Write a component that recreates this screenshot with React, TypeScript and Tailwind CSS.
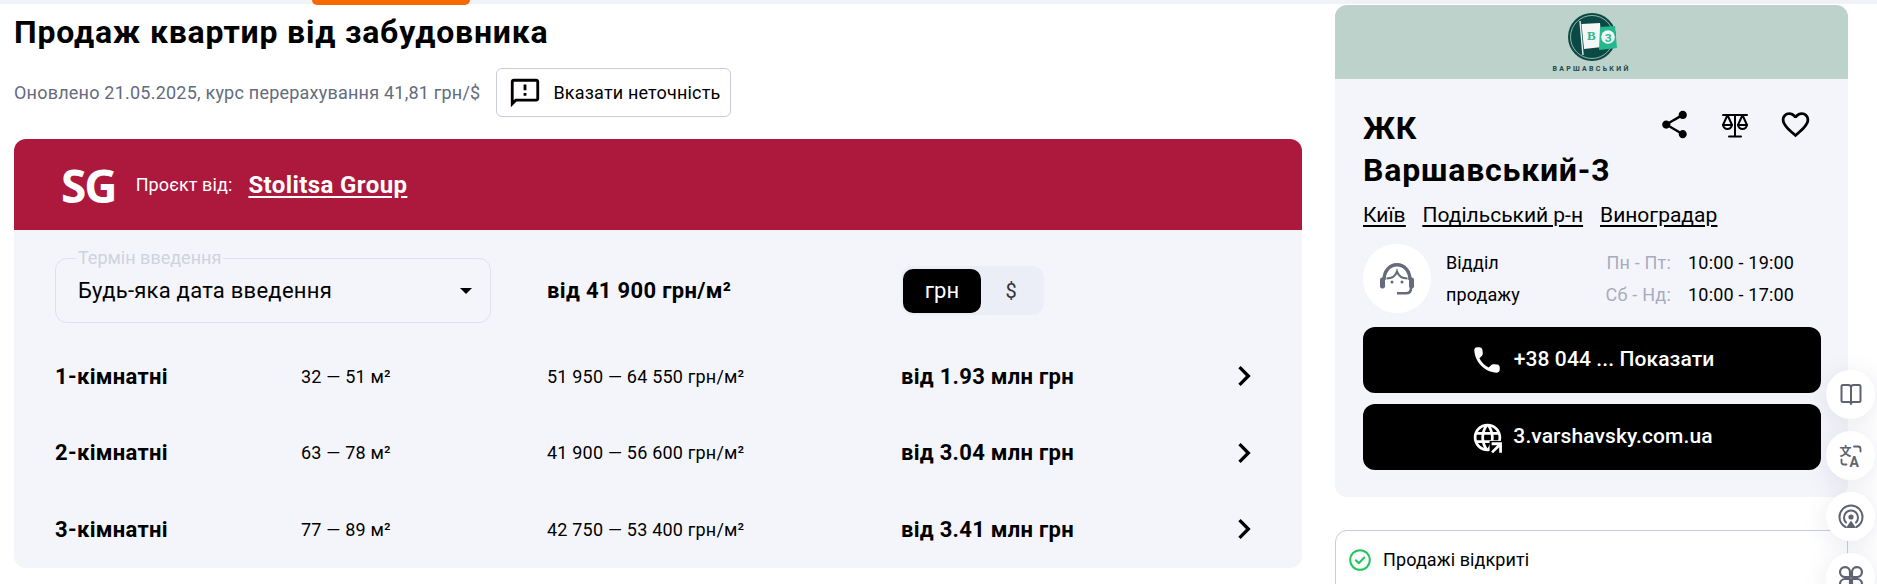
import React from "react";
import { MdOutlineFeedback, MdShare, MdFavoriteBorder, MdChevronRight } from "react-icons/md";

const rows = [
  ["1-кімнатні", "32 — 51 м²", "51 950 — 64 550 грн/м²", "від 1.93 млн грн"],
  ["2-кімнатні", "63 — 78 м²", "41 900 — 56 600 грн/м²", "від 3.04 млн грн"],
  ["3-кімнатні", "77 — 89 м²", "42 750 — 53 400 грн/м²", "від 3.41 млн грн"],
];

function Logo() {
  return (
    <svg width="70" height="50" viewBox="0 0 70 50" className="block">
      <circle cx="35" cy="25" r="24" fill="#0b4a44" />
      <circle cx="35" cy="25" r="21.5" fill="none" stroke="#cfe0da" strokeWidth="0.7" />
      <path d="M23 9 L26 43" stroke="#e6efec" strokeWidth="1.4" />
      <path d="M24.5 12 L43 11 L45 35 L27 37 Z" fill="#f4f7f5" />
      <path d="M43 15 L58 14 L60 36 L42 38 Z" fill="#25b88e" />
      <text x="30" y="28" fontSize="13" fontWeight="700" fill="#2bb98f" fontFamily="'Liberation Serif', serif">В</text>
      <circle cx="51" cy="25" r="6.8" fill="#f4f7f5" />
      <text x="47.8" y="29.5" fontSize="11" fontWeight="700" fill="#25b88e" fontFamily="Roboto, sans-serif">З</text>
    </svg>
  );
}

function ScaleIcon() {
  return (
    <svg width="28" height="26" viewBox="0 0 28 26" fill="none" stroke="#000" strokeWidth="2" strokeLinejoin="round" strokeLinecap="round">
      <path d="M2 3h24M14 3v21M8 24.5h12" />
      <path d="M6.5 3 2 13c.6 2.6 2.4 4 4.500 4s3.900-1.400 4.500-4z" />
      <path d="M21.500 3 17 13c.6 2.600 2.400 4 4.500 4s3.900-1.400 4.500-4z" />
      <path d="M2 13h9M17 13h9" />
    </svg>
  );
}

function AgentIcon() {
  return (
    <svg width="36" height="32" viewBox="0 0 36 32" fill="none">
      <path d="M5 17C5 8 10.500 1.800 18 1.800S31 8 31 17" stroke="#666b7b" strokeWidth="3.400" />
      <rect x="1" y="14.500" width="5" height="11" rx="2.200" fill="#666b7b" />
      <rect x="30" y="14.500" width="5" height="11" rx="2.200" fill="#666b7b" />
      <path d="M7.500 15.500C12.500 15.500 16.500 13 18 8.500c1.500 4.500 5.500 7 10.500 7" stroke="#666b7b" strokeWidth="2.200" />
      <path d="M32 25c0 4-2 5.300-5 5.300h-9" stroke="#666b7b" strokeWidth="2.600" />
      <circle cx="13" cy="19" r="1.500" fill="#666b7b" />
      <circle cx="23" cy="19" r="1.500" fill="#666b7b" />
    </svg>
  );
}

function PhoneIcon() {
  return (
    <svg width="34" height="34" viewBox="0 0 24 24" fill="#fff">
      <path d="M19.230 15.260l-2.540-.29a1.990 1.990 0 0 0-1.640.57l-1.840 1.840a15.045 15.045 0 0 1-6.590-6.590l1.850-1.850c.43-.43.64-1.030.57-1.640l-.29-2.520a2.001 2.001 0 0 0-1.990-1.770H5.030c-1.130 0-2.070.94-2 2.070.53 8.540 7.360 15.360 15.890 15.890 1.130.07 2.070-.87 2.070-2v-1.730c.01-1.010-.75-1.860-1.760-1.980z" />
    </svg>
  );
}

function GlobeIcon() {
  return (
    <svg width="33" height="33" viewBox="0 0 24 24" fill="#fff">
      <path d="M11.99 2C6.47 2 2 6.48 2 12s4.470 10 9.990 10C17.520 22 22 17.520 22 12S17.520 2 11.990 2zm6.930 6h-2.950c-.32-1.250-.78-2.450-1.380-3.560 1.840.63 3.370 1.910 4.330 3.560zM12 4.040c.83 1.200 1.480 2.530 1.910 3.960h-3.820c.43-1.430 1.080-2.760 1.910-3.960zM4.260 14C4.100 13.360 4 12.690 4 12s.1-1.360.26-2h3.380c-.08.66-.14 1.320-.14 2 0 .68.06 1.340.14 2H4.260zm.82 2h2.950c.32 1.250.78 2.450 1.380 3.560-1.840-.63-3.370-1.900-4.330-3.560zm2.950-8H5.080c.96-1.660 2.490-2.930 4.330-3.560C8.810 5.550 8.350 6.750 8.030 8zM12 19.960c-.83-1.200-1.480-2.530-1.910-3.960h3.820c-.43 1.430-1.080 2.760-1.910 3.960zM14.340 14H9.660c-.09-.66-.16-1.320-.16-2 0-.68.07-1.350.16-2h4.680c.09.65.16 1.320.16 2 0 .68-.07 1.340-.16 2zm.25 5.560c.6-1.110 1.060-2.310 1.380-3.560h2.950c-.96 1.650-2.490 2.930-4.330 3.560zM16.360 14c.08-.66.14-1.320.14-2 0-.68-.06-1.340-.14-2h3.380c.16.64.26 1.310.26 2s-.1 1.360-.26 2h-3.380z" />
      <rect x="13.500" y="14.500" width="10.500" height="9.500" fill="#000" />
      <path d="M15 15.500h7.500V23H20.500v-4l-4.500 4.500-1.400-1.400 4.500-4.500H15z" />
    </svg>
  );
}

const ink = "#5f6270";

function BookIcon() {
  return (
    <svg width="22" height="24" viewBox="0 0 22 24" fill="none" stroke={ink} strokeWidth="2" strokeLinejoin="round" strokeLinecap="round">
      <path d="M11 4.500C11 3 10 2 8.500 2H3C2 2 1.500 2.500 1.500 3.500v14c0 1 .5 1.500 1.500 1.500h6c1 0 2 .7 2 2 0-1.300 1-2 2-2h6c1 0 1.500-.5 1.500-1.500v-14C20.500 2.500 20 2 19 2h-5.500C12 2 11 3 11 4.500zM11 4.500V21" />
    </svg>
  );
}

function TranslateIcon() {
  return (
    <svg width="28" height="32" viewBox="-2 -4 28 32" fill="none">
      <path d="M15 2.500h4c1.500 0 2.500 1 2.500 2.500v2.500M2.500 15.500V18c0 1.500 1 2.500 2.500 2.500h2.500" stroke={ink} strokeWidth="1.800" strokeLinecap="round" />
      <text x="0.500" y="11.500" fontSize="12" fontWeight="700" fill={ink} fontFamily="'Noto Sans CJK SC', sans-serif">文</text>
      <text x="10.500" y="22.500" fontSize="14" fontWeight="700" fill={ink} fontFamily="Roboto, sans-serif">A</text>
    </svg>
  );
}

function CastIcon() {
  return (
    <svg width="26" height="26" viewBox="0 0 26 26" fill="none" stroke={ink} strokeWidth="2" strokeLinecap="round">
      <path d="M7.500 23C3.800 21 1.500 17.300 1.500 13a11.500 11.500 0 0 1 23 0c0 4.300-2.300 8-6 10" />
      <path d="M8 18.500A7 7 0 0 1 6 13.500a7 7 0 0 1 14 0 7 7 0 0 1-2 5" />
      <circle cx="13" cy="13" r="2.600" fill={ink} stroke="none" />
      <path d="M13 16.500 18 24H8z" fill={ink} stroke="none" />
    </svg>
  );
}

function AppsIcon() {
  return (
    <svg width="26" height="26" viewBox="0 0 26 26" fill="none" stroke={ink} strokeWidth="2.200" strokeLinejoin="round">
      <path d="M12 12H6.500a5 5 0 1 1 5.500-5.500z" />
      <path d="M14 12h5.500A5 5 0 1 0 14 6.500z" />
      <path d="M12 14H6.500a5 5 0 1 0 5.500 5.500z" />
      <path d="M14 14h5.500a5 5 0 1 1-5.500 5.500z" />
    </svg>
  );
}

function Side({ children }: { children: React.ReactNode }) {
  return (
    <div className="flex h-[49px] w-[49px] shrink-0 items-center justify-center rounded-full bg-white shadow-[0_4px_24px_rgba(90,100,140,0.14)]">
      {children}
    </div>
  );
}

export default function App() {
  return (
    <div className="relative h-[584px] w-full overflow-hidden bg-white text-black" style={{ fontFamily: "Roboto, 'Liberation Sans', sans-serif" }}>
      <div className="h-[4px] bg-[#eff2f7]">
        <div className="ml-[312px] h-[5px] w-[158px] rounded-b-[7px] bg-[#f46a00]" />
      </div>

      <div className="flex items-start pl-[14px]">
        <main className="w-[1288px] shrink-0">
          <h1 className="mt-[10px] h-[36px] text-[32px] leading-[36px] font-bold tracking-[0.8px]">Продаж квартир від забудовника</h1>
          <div className="mt-[18px] flex h-[49px] items-center">
            <span className="text-[18px] tracking-[0.22px] text-[#646b7d]">Оновлено 21.05.2025, курс перерахування 41,81 грн/$</span>
            <button className="ml-[16px] flex h-[49px] w-[235px] items-center rounded-[6px] border border-[#c9cbe0] bg-white pl-[11px]">
              <MdOutlineFeedback size={34} color="#000" />
              <span className="ml-[11px] text-[18px] tracking-[0.18px]">Вказати неточність</span>
            </button>
          </div>

          <section className="mt-[22px] overflow-hidden rounded-[12px] bg-[#f4f5fa]">
            <div className="flex h-[91px] items-center bg-[#ad193d] pl-[47px] text-white">
              <span className="text-[46px] leading-none font-bold tracking-[-2px]" style={{ fontFamily: "'Open Sans', sans-serif" }}>SG</span>
              <span className="ml-[20px] text-[18px] tracking-[0.1px]">Проєкт від:</span>
              <a className="ml-[16px] text-[24px] font-bold tracking-[0.4px] underline underline-offset-[3px]">Stolitsa Group</a>
            </div>
            <div className="pt-[28px] pr-[38px] pl-[41px]">
              <div className="grid grid-cols-[246px_246px_354px_1fr] items-center">
                <div className="relative col-span-2 flex h-[65px] w-[436px] items-center justify-between rounded-[12px] border border-[#dfe1ea] pr-[18px] pl-[22px]">
                  <span className="absolute top-[-12px] left-[20px] bg-[#f4f5fa] px-[2px] text-[18px] leading-[22px] text-[#cfd2e0]">Термін введення</span>
                  <span className="text-[22px] tracking-[0.25px]">Будь-яка дата введення</span>
                  <span className="h-0 w-0 border-x-[6px] border-t-[6px] border-x-transparent border-t-black" />
                </div>
                <div className="text-[22px] font-bold tracking-[0.33px]">від 41 900 грн/м²</div>
                <div className="flex h-[49px] w-[143px] items-center rounded-[12px] bg-[#ebeef6] pl-[2px] text-[22px]">
                  <span className="flex h-[44px] w-[78px] items-center justify-center rounded-[10px] bg-black text-white">грн</span>
                  <span className="flex w-[60px] justify-center text-[20px] text-[#333]">$</span>
                </div>
              </div>
              <div className="mt-[15px]">
                {rows.map((r) => (
                  <div key={r[0]} className="grid h-[76.5px] grid-cols-[246px_246px_354px_1fr] items-center">
                    <div className="text-[22px] font-bold tracking-[0.32px]">{r[0]}</div>
                    <div className="text-[18px] tracking-[0.2px]">{r[1]}</div>
                    <div className="text-[18px] tracking-[0.2px]">{r[2]}</div>
                    <div className="flex items-center justify-between">
                      <span className="text-[22px] font-bold tracking-[0.28px]">{r[3]}</span>
                      <MdChevronRight size={40} color="#000" />
                    </div>
                  </div>
                ))}
              </div>
            </div>
          </section>
        </main>

        <aside className="ml-[33px] w-[513px] shrink-0">
          <div className="mt-[1px] overflow-hidden rounded-[12px] bg-[#f4f5fa]">
            <div className="flex h-[74px] flex-col items-center bg-[#bcd2ca] pt-[7px]">
              <Logo />
              <span className="mt-[3px] text-[7px] leading-[8px] font-bold tracking-[2.3px] text-[#1c4a46]">ВАРШАВСЬКИЙ</span>
            </div>
            <div className="px-[28px] pt-[28px] pb-[27px]">
              <div className="flex items-start justify-between">
                <h2 className="w-[260px] text-[32px] leading-[42px] font-bold tracking-[0.8px]">ЖК Варшавський-3</h2>
                <div className="mr-[8px] flex items-center gap-[30px] pt-[1px]">
                  <MdShare size={33} color="#000" />
                  <ScaleIcon />
                  <MdFavoriteBorder size={33} color="#000" />
                </div>
              </div>
              <div className="mt-[10px] flex gap-[17px] text-[21px] leading-[28px] underline underline-offset-[3px]">
                <a>Київ</a>
                <a>Подільський р-н</a>
                <a>Виноградар</a>
              </div>
              <div className="mt-[15px] flex h-[69px] items-center">
                <div className="flex h-[69px] w-[68px] items-center justify-center rounded-full bg-white">
                  <AgentIcon />
                </div>
                <div className="ml-[15px] w-[100px] text-[18px] leading-[32px] tracking-[0.1px]">Відділ<br />продажу</div>
                <div className="grid grid-cols-[125px_auto] gap-x-[17px] text-[18px] leading-[32px] tracking-[0.2px]">
                  <span className="text-right text-[#a8acbf]">Пн - Пт:</span><span>10:00 - 19:00</span>
                  <span className="text-right text-[#a8acbf]">Сб - Нд:</span><span>10:00 - 17:00</span>
                </div>
              </div>
              <button className="mt-[14px] flex h-[66px] w-[458px] items-center justify-center rounded-[12px] bg-black text-[21px] font-medium tracking-[0.1px] text-white">
                <PhoneIcon />
                <span className="ml-[10px]">+38 044 ... Показати</span>
              </button>
              <button className="mt-[11px] flex h-[66px] w-[458px] items-center justify-center rounded-[12px] bg-black text-[21px] font-medium tracking-[0.1px] text-white">
                <GlobeIcon />
                <span className="ml-[9px]">3.varshavsky.com.ua</span>
              </button>
            </div>
          </div>
          <div className="mt-[33px] flex h-[120px] items-start rounded-[12px] border border-[#c9cbe0] pt-[18px] pl-[13px]">
            <svg width="22" height="22" viewBox="0 0 22 22" fill="none" stroke="#22c55e" strokeWidth="2" strokeLinecap="round" strokeLinejoin="round">
              <circle cx="11" cy="11" r="9.800" />
              <path d="m6.800 11.300 3 3 5.400-5.800" />
            </svg>
            <span className="ml-[12px] text-[18px] leading-[22px] tracking-[0.1px]">Продажі відкриті</span>
          </div>
        </aside>
      </div>

      <div className="absolute top-[370px] left-[1826px] flex flex-col gap-[12px]">
        <Side><BookIcon /></Side>
        <Side><TranslateIcon /></Side>
        <Side><CastIcon /></Side>
        <Side><AppsIcon /></Side>
      </div>
    </div>
  );
}
